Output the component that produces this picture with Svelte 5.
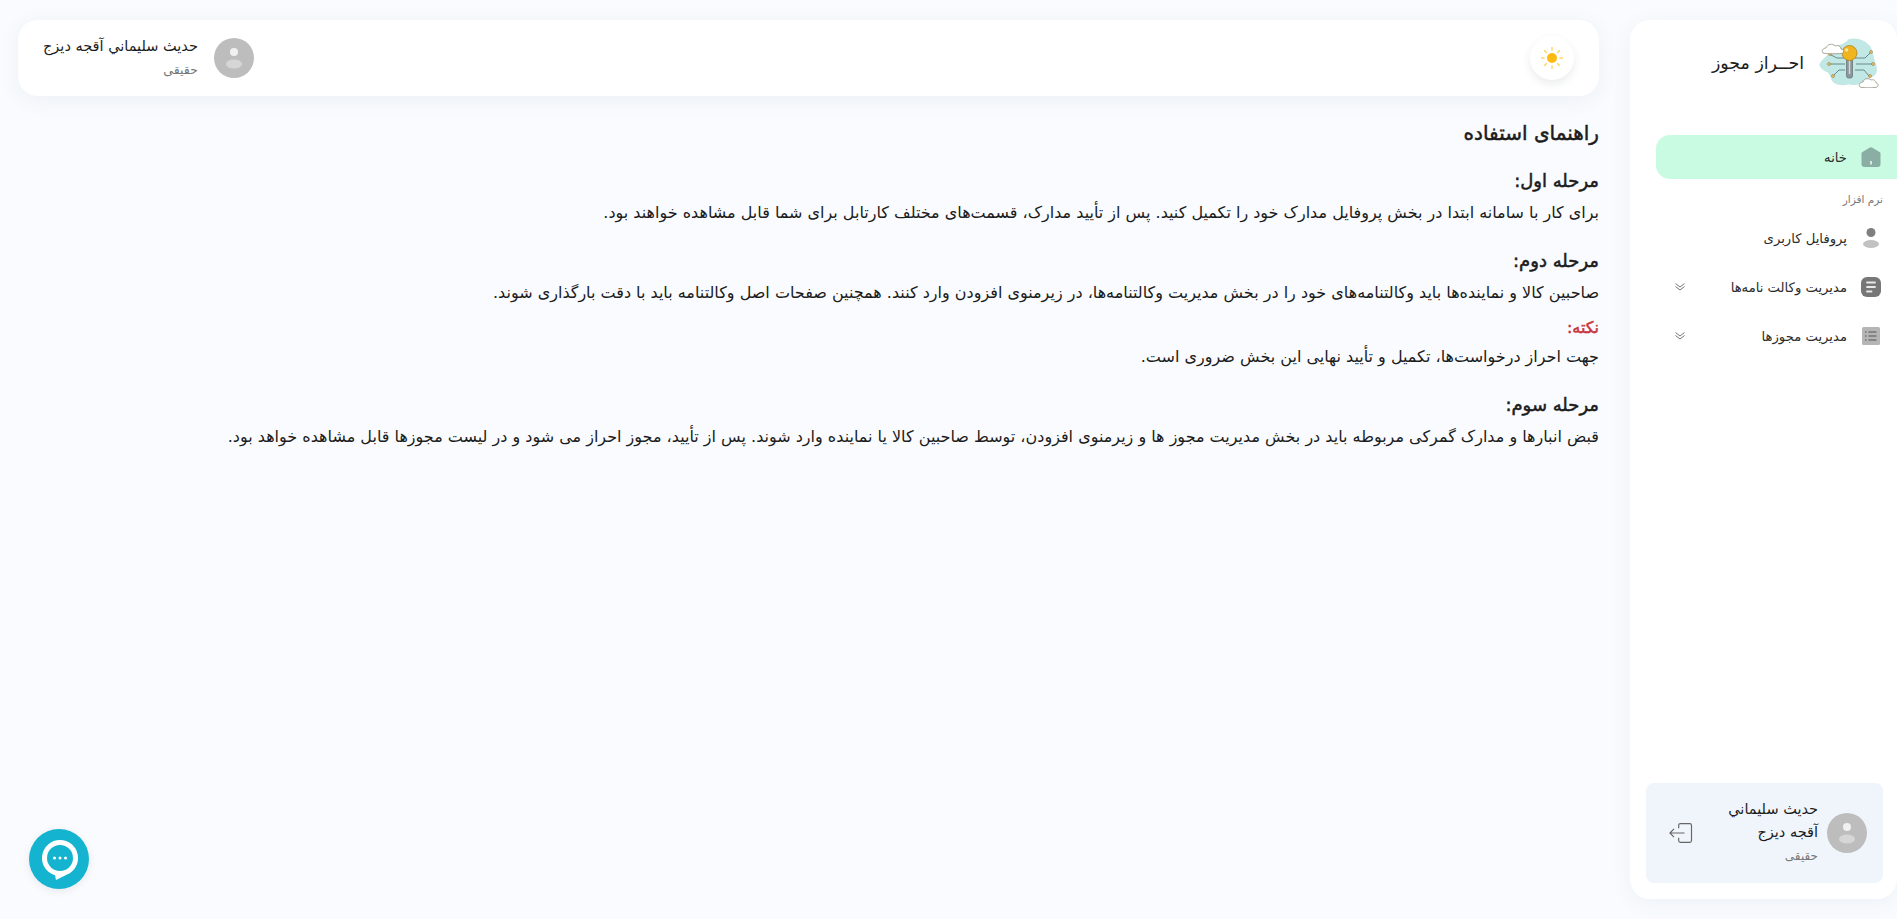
<script lang="ts">
  const steps = [
    {
      title: "مرحله اول:",
      text: "برای کار با سامانه ابتدا در بخش پروفایل مدارک خود را تکمیل کنید. پس از تأیید مدارک، قسمت‌های مختلف کارتابل برای شما قابل مشاهده خواهند بود."
    },
    {
      title: "مرحله دوم:",
      text: "صاحبین کالا و نماینده‌ها باید وکالتنامه‌های خود را در بخش مدیریت وکالتنامه‌ها، در زیرمنوی افزودن وارد کنند. همچنین صفحات اصل وکالتنامه باید با دقت بارگذاری شوند.",
      note: "جهت احراز درخواست‌ها، تکمیل و تأیید نهایی این بخش ضروری است."
    },
    {
      title: "مرحله سوم:",
      text: "قبض انبارها و مدارک گمرکی مربوطه باید در بخش مدیریت مجوز ها و زیرمنوی افزودن، توسط صاحبین کالا یا نماینده وارد شوند. پس از تأیید، مجوز احراز می شود و در لیست مجوزها قابل مشاهده خواهد بود."
    }
  ];
  const rays = [0, 45, 90, 135, 180, 225, 270, 315];
</script>

{#snippet avatar()}
  <svg class="avatar" viewBox="0 0 40 40">
    <circle cx="20" cy="20" r="20" fill="#bdbdbd" />
    <circle cx="20" cy="14" r="4" fill="#f1f1f1" />
    <ellipse cx="20" cy="26" rx="8" ry="4.5" fill="#d6d6d6" />
  </svg>
{/snippet}

{#snippet chevrons()}
  <svg class="chev" viewBox="0 0 10 10" fill="none" stroke="#777" stroke-width="1">
    <path d="M.5 1.5 5 5l4.5-3.5M.5 4.5 5 8l4.5-3.5" />
  </svg>
{/snippet}

<div class="page" dir="rtl">
  <aside class="sidebar">
    <div class="brand">
      <svg class="logo" viewBox="0 0 60 50">
        <path d="M12 12C18 6 24 8 30 1c8-2 16 1 21 7 4 6 3 12 6 18 2 7 1 12-6 14-6 1-9 8-17 7-6-2-10 2-17-1C11 44 13 38 8 34 3 32-1 28 1 25c2-4 8-7 11-13z" fill="#c2e8e6" />
        <g fill="none" stroke="#5f7f80" stroke-width=".9">
          <path d="M36 20h10l5-5M37 26h16M36 32h9l5 6M26 20H18l-6-3M26 26H11M26 32H20l-5 5" />
        </g>
        <g fill="#e9c16a" stroke="#8a6a2a" stroke-width=".5">
          <circle cx="52" cy="14" r="1.5" /><circle cx="54" cy="26" r="1.5" /><circle cx="51" cy="38" r="1.5" />
          <circle cx="11" cy="16" r="1.5" /><circle cx="10" cy="26" r="1.5" /><circle cx="14" cy="38" r="1.5" />
        </g>
        <rect x="27.5" y="18" width="6" height="22" rx="2" fill="#8c979c" stroke="#55605f" stroke-width=".6" />
        <path d="M30.5 22v14" stroke="#d4d9da" stroke-width="1.4" />
        <circle cx="30.5" cy="15" r="7.5" fill="#f0b41e" stroke="#a9791a" stroke-width=".7" />
        <circle cx="27.5" cy="12" r="1.8" fill="#fbe39a" />
        <path d="M4 15c-2-2 0-5 3-5 1-4 7-5 9-2 3-1 6 0 6 3 3 0 3 3 2 4-1 1-19 1-20 0z" fill="#fff" stroke="#8b8474" stroke-width=".7" />
        <path d="M41 49c-2-2 0-5 3-5 1-4 6-4 8-2 3-1 5 1 5 3 2 0 3 3 1 4-1 1-16 1-17 0z" fill="#fff" stroke="#8b8474" stroke-width=".7" />
      </svg>
      <span class="brand-name">احــراز مجوز</span>
    </div>

    <nav class="menu">
      <div class="item active">
        <svg class="ico" viewBox="0 0 20 20">
          <path d="M8.5.8a3 3 0 0 1 3 0l7 4.2a1.5 1.5 0 0 1 1 1.500V17a3 3 0 0 1-3 3h-13a3 3 0 0 1-3-3V6.500A1.500 1.500 0 0 1 1.500 5z" fill="#8aaea3" />
          <rect x="9.300" y="14" width="1.400" height="3.500" fill="#fff" />
        </svg>
        <span>خانه</span>
      </div>
      <div class="section">نرم افزار</div>
      <div class="item">
        <svg class="ico" viewBox="0 0 20 20">
          <circle cx="10" cy="4.500" r="4.500" fill="#7f7f7f" />
          <ellipse cx="10" cy="16" rx="8" ry="4" fill="#c2c2c2" />
        </svg>
        <span>پروفایل کاربری</span>
      </div>
      <div class="item">
        <svg class="ico" viewBox="0 0 20 20">
          <rect width="20" height="20" rx="6" fill="#777" />
          <path d="M6 5.500h8M6 10h8M6 14.500h4.500" stroke="#e8e8e8" stroke-width="1.800" stroke-linecap="round" />
        </svg>
        <span>مدیریت وکالت نامه‌ها</span>
        {@render chevrons()}
      </div>
      <div class="item">
        <svg class="ico" viewBox="0 0 20 20">
          <rect x="1" y="1" width="18" height="18" rx="1.500" fill="#b5b5b5" />
          <path d="M7.500 6h8M7.500 10h8M7.500 14h8M4 6h1.500M4 10h1.500M4 14h1.500" stroke="#555" stroke-width="1.200" />
        </svg>
        <span>مدیریت مجوزها</span>
        {@render chevrons()}
      </div>
    </nav>

    <div class="account">
      {@render avatar()}
      <div class="account-info">
        <div class="account-name">حدیث سلیماني آقجه دیزج</div>
        <div class="account-type">حقیقی</div>
      </div>
      <svg class="logout" viewBox="0 0 24 24" fill="none" stroke="#666" stroke-width="1">
        <path d="M10 8V5.500A1.500 1.500 0 0 1 11.500 4h8A1.500 1.500 0 0 1 21 5.500v13a1.500 1.500 0 0 1-1.500 1.500h-8a1.500 1.500 0 0 1-1.500-1.500V16M15 12H2.500M6 8.500 2.500 12 6 15.500" />
      </svg>
    </div>
  </aside>

  <main class="content">
    <header class="topbar">
      <div class="sun-btn">
        <svg viewBox="0 0 24 24" width="24" height="24">
          <circle cx="12" cy="12" r="5" fill="#fdbb12" />
          {#each rays as r}
            <rect x="11.300" y="1" width="1.400" height="3.600" fill="#fcd45c" transform="rotate({r} 12 12)" />
          {/each}
        </svg>
      </div>
      <div class="user">
        {@render avatar()}
        <div>
          <div class="user-name">حدیث سلیماني آقجه دیزج</div>
          <div class="user-type">حقیقی</div>
        </div>
      </div>
    </header>

    <article class="guide">
      <h1>راهنمای استفاده</h1>
      {#each steps as step}
        <section class="step">
          <h2>{step.title}</h2>
          <p>{step.text}</p>
          {#if step.note}
            <h3>نکته:</h3>
            <p>{step.note}</p>
          {/if}
        </section>
      {/each}
    </article>
  </main>

  <button class="chat" aria-label="chat">
    <svg viewBox="0 0 44 44" width="44" height="44">
      <path d="M23 3a18 18 0 0 1 7 34.600L19 43l-1-4.700A18 18 0 0 1 23 3z" fill="#fff" />
      <circle cx="23" cy="21" r="13" fill="#14b4d0" />
      <circle cx="17.500" cy="21" r="1.500" fill="#fff" />
      <circle cx="23" cy="21" r="1.500" fill="#fff" />
      <circle cx="28.500" cy="21" r="1.500" fill="#fff" />
    </svg>
  </button>
</div>

<style>
  :global(body) {
    background: #f9fbfe;
    font-family: "DejaVu Sans", "Noto Sans", sans-serif;
    color: #1c1c1c;
  }
  .page {
    height: 919px;
    display: flex;
    box-sizing: border-box;
    padding: 20px 0 20px 18px;
    gap: 31px;
    overflow: hidden;
  }
  .sidebar {
    width: 267px;
    flex: none;
    box-sizing: border-box;
    background: #fff;
    border-radius: 20px;
    box-shadow: 0 4px 20px rgba(90, 110, 140, 0.07);
    display: flex;
    flex-direction: column;
    padding-bottom: 16px;
  }
  .brand {
    height: 86px;
    margin-bottom: 29px;
    display: flex;
    align-items: center;
    gap: 15px;
    padding-right: 18px;
  }
  .logo {
    width: 60px;
    height: 50px;
  }
  .brand-name {
    font-size: 17.4px;
  }
  .menu {
    flex: 1;
    margin-left: 26px;
    font-size: 13.2px;
  }
  .item {
    height: 44px;
    display: flex;
    align-items: center;
    gap: 14px;
    padding-right: 16px;
    margin-bottom: 5px;
    color: #2a2a2a;
  }
  .item.active {
    background: #c9fbe3;
    border-start-end-radius: 14px;
    border-end-end-radius: 14px;
    margin-bottom: 13px;
  }
  .ico {
    width: 20px;
    height: 20px;
    flex: none;
  }
  .chev {
    width: 10px;
    height: 10px;
    margin-right: auto;
    margin-left: 19px;
  }
  .section {
    font-size: 10.5px;
    line-height: 14px;
    color: #777;
    padding-right: 14px;
    margin-bottom: 10px;
  }
  .account {
    margin: 0 14px 0 16px;
    height: 100px;
    background: #f0f5fb;
    border-radius: 8px;
    display: flex;
    align-items: center;
    gap: 9px;
    padding: 0 16px 0 21px;
    box-sizing: border-box;
  }
  .account-info {
    flex: 1;
  }
  .account-name {
    max-width: 100px;
    font-size: 14.5px;
    line-height: 23px;
  }
  .account-type {
    font-size: 12px;
    line-height: 24px;
    color: #777;
  }
  .logout {
    width: 28px;
    height: 28px;
  }
  .avatar {
    width: 40px;
    height: 40px;
    flex: none;
  }
  .user-type {
    font-size: 12.5px;
    line-height: 23px;
    color: #777;
  }
  .content {
    flex: 1;
    min-width: 0;
  }
  .topbar {
    height: 76px;
    background: #fff;
    border-radius: 20px;
    box-shadow: 0 4px 20px rgba(90, 110, 140, 0.08);
    display: flex;
    align-items: center;
    justify-content: space-between;
    padding: 0 25px;
  }
  .sun-btn {
    width: 44px;
    height: 44px;
    border-radius: 50%;
    background: #fff;
    box-shadow: 0 4px 8px rgba(60, 70, 90, 0.1);
    display: flex;
    align-items: center;
    justify-content: center;
  }
  .user {
    display: flex;
    align-items: center;
    gap: 16px;
  }
  .user-name {
    font-size: 14.5px;
    line-height: 23px;
  }
  .guide {
    padding-top: 25px;
  }
  h1,
  h2,
  h3 {
    font-weight: 400;
    -webkit-text-stroke: 0.5px currentColor;
  }
  h1 {
    font-size: 20px;
    line-height: 24px;
    margin: 0 0 24px;
  }
  h2 {
    font-size: 18px;
    line-height: 24px;
    margin: 0 0 8px;
  }
  h3 {
    font-size: 16px;
    line-height: 22px;
    margin: 12px 0 6px;
    color: #c8353f;
  }
  p {
    font-size: 16px;
    line-height: 24px;
    margin: 0;
  }
  .step {
    margin-bottom: 24px;
  }
  .chat {
    position: absolute;
    left: 29px;
    bottom: 30px;
    width: 60px;
    height: 60px;
    border: 0;
    padding: 0;
    border-radius: 50%;
    background: #14b4d0;
    box-shadow: 0 2px 8px rgba(0, 0, 0, 0.08);
    display: flex;
    align-items: center;
    justify-content: center;
  }
</style>
